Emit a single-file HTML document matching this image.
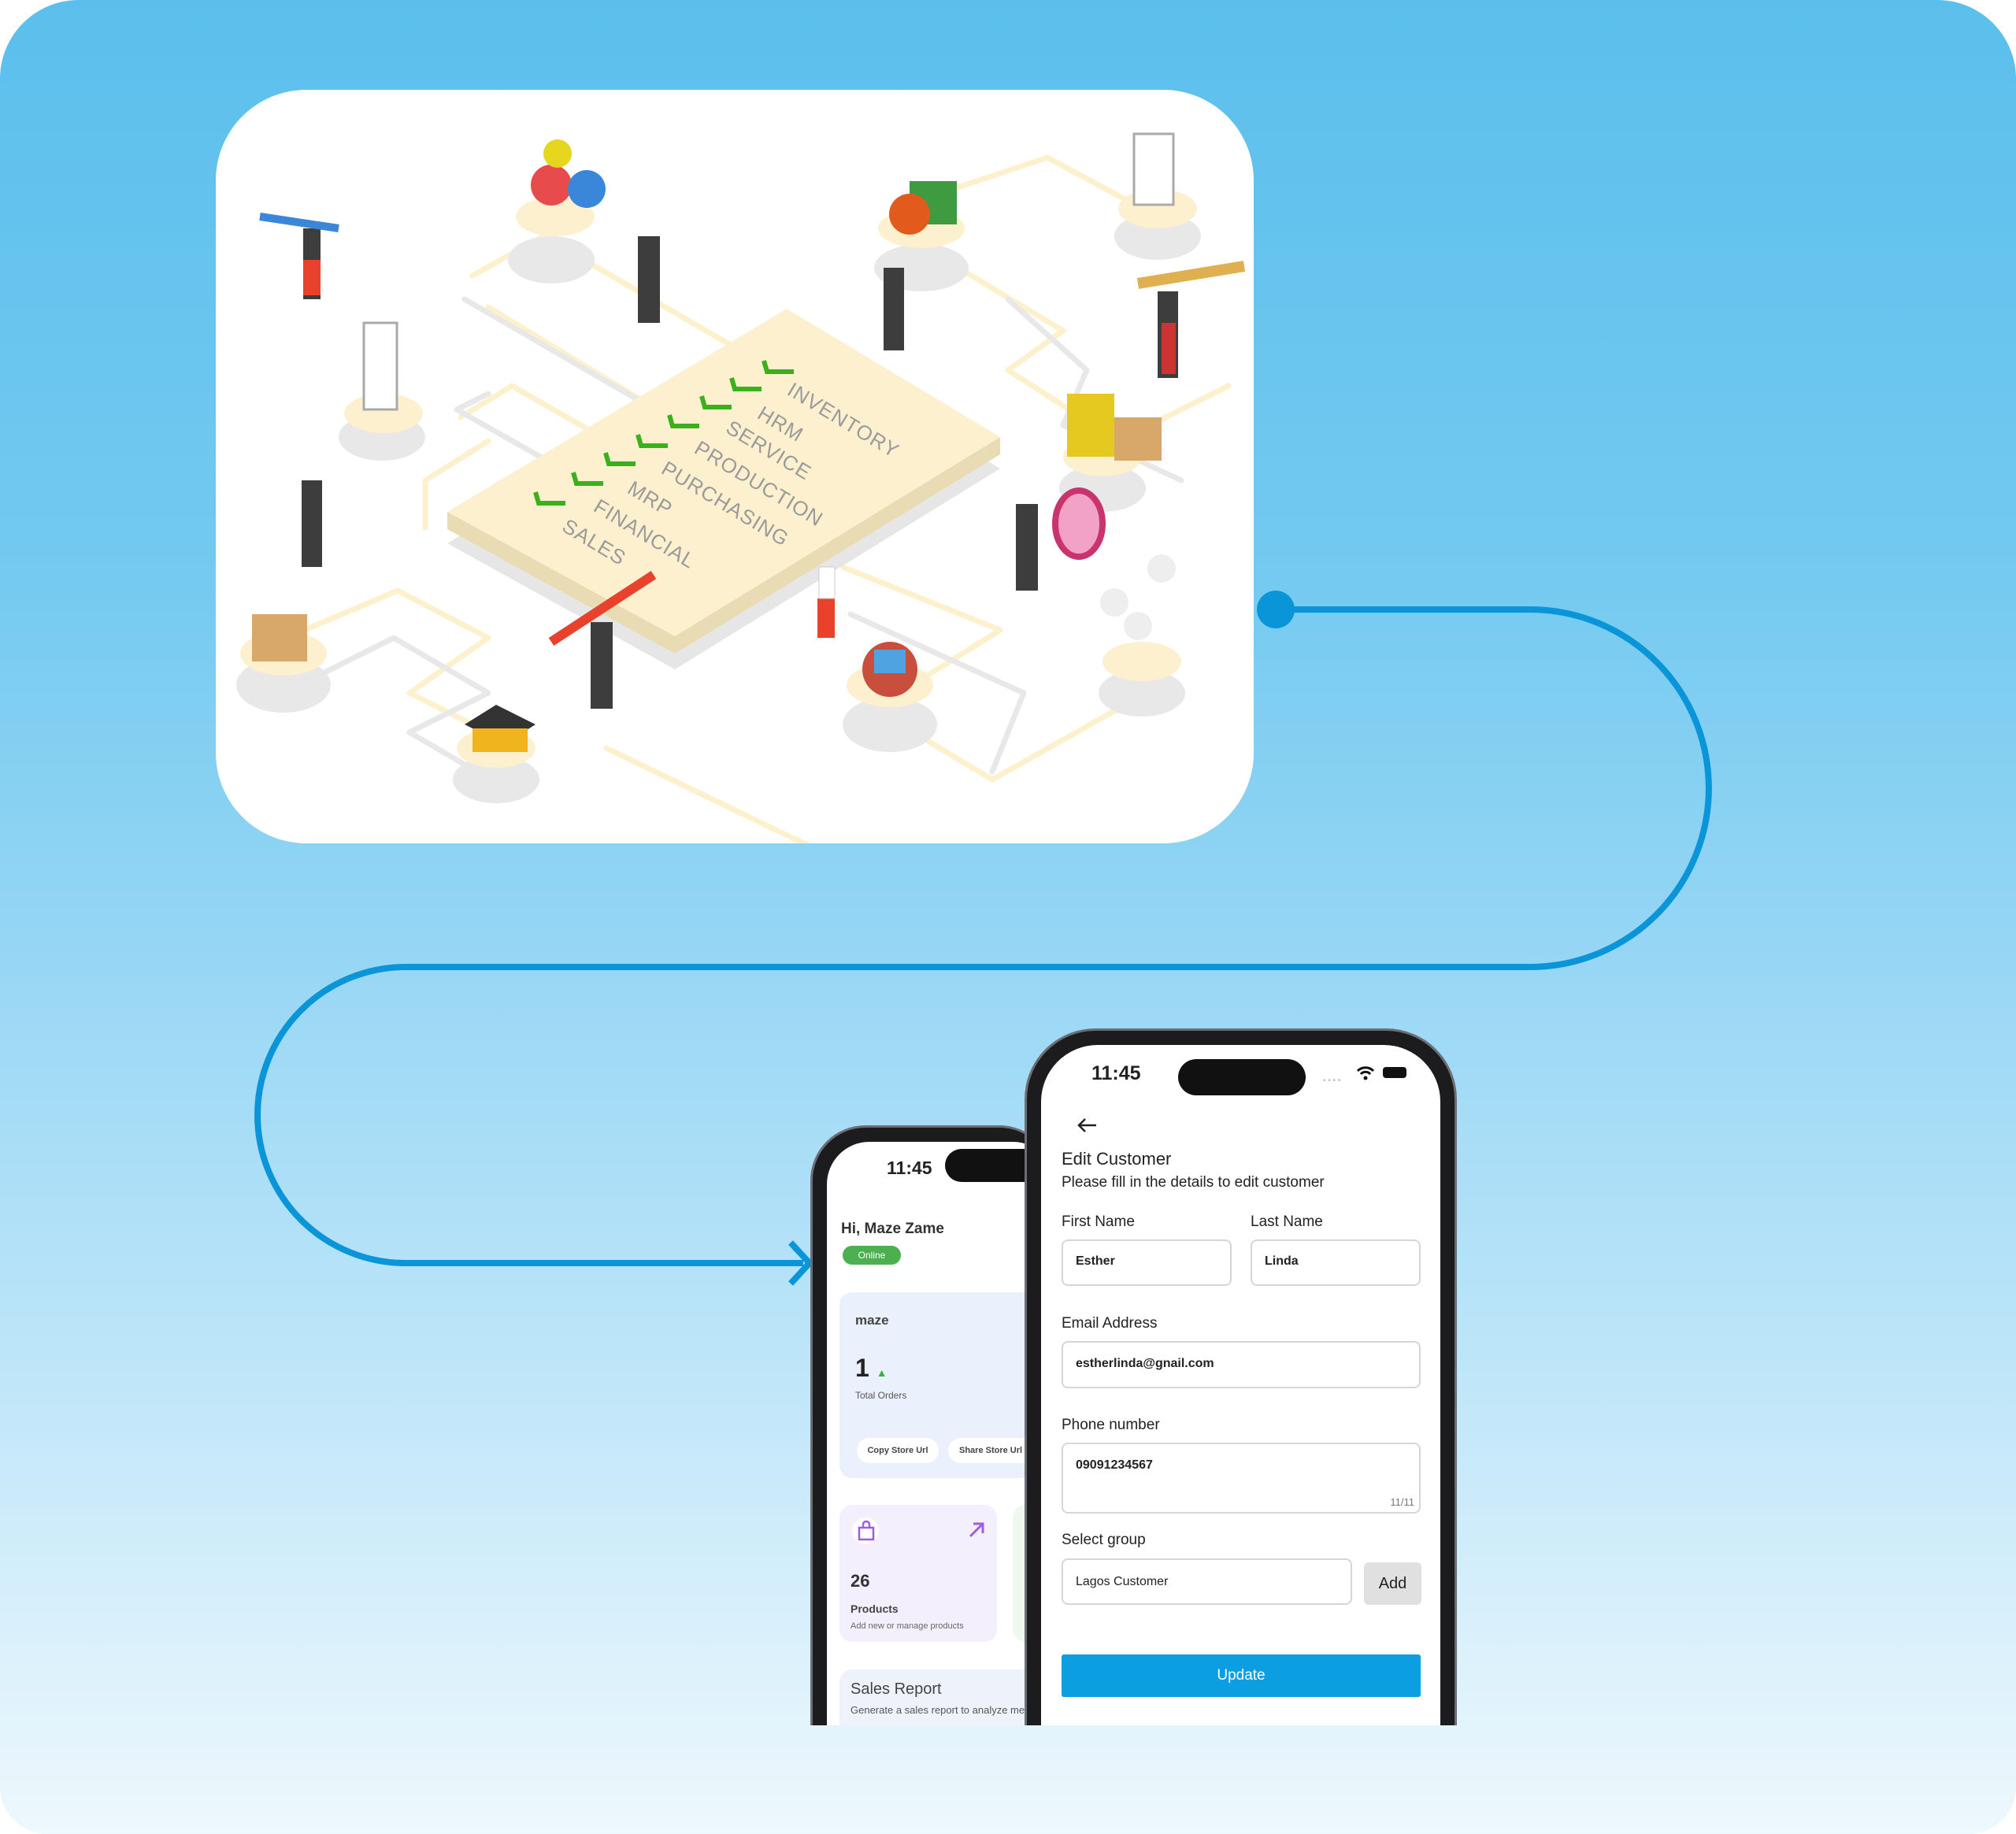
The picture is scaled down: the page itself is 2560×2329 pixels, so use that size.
<!DOCTYPE html>
<html><head><meta charset="utf-8"><style>
*{margin:0;padding:0;box-sizing:border-box}
body{width:2560px;height:2329px;background:#fff;position:relative;overflow:hidden;font-family:"Liberation Sans","DejaVu Sans",sans-serif}
.bg{position:absolute;left:0;top:0;width:2560px;height:2329px;border-radius:100px 100px 60px 60px;background:linear-gradient(180deg,#5bbfec 0%,#72c9f0 30%,#93d5f4 50%,#bfe6f9 75%,#eef8fd 100%)}
.card{position:absolute;left:274px;top:114px;width:1318px;height:957px;background:#fff;border-radius:115px;overflow:hidden}
.abs{position:absolute}
.clip{position:absolute;left:0;top:0;width:2560px;height:2191px;overflow:hidden}
.phone{position:absolute;background:#1c1c1e;border:3px solid #6b6e74;overflow:hidden}
.screen{position:absolute;background:#fff;overflow:hidden}
.t{position:absolute;white-space:nowrap;color:#222}
.inp{position:absolute;border:2px solid #d6d6d6;border-radius:8px;background:#fff}
</style></head><body>
<div class="bg"></div>

<div class="card">
<svg width="1318" height="957" viewBox="274 114 1318 957" style="position:absolute;left:0;top:0">
 <g fill="none" stroke-width="7" stroke-linecap="round" stroke-linejoin="round">
  <path d="M600 350 L690 300 L1000 480 M620 390 L900 560 M585 530 L650 490 L860 610 M620 560 L540 610 L540 670" stroke="#fdf0cc"/>
  <path d="M1180 250 L1330 200 L1460 270 M1200 330 L1350 420 L1280 470 L1420 560 L1560 490" stroke="#fdf0cc"/>
  <path d="M340 820 L505 750 L620 810 L520 880 L640 940 M770 950 L1060 1090 M1070 720 L1270 800 L1110 900 L1260 990 L1420 900" stroke="#fdf0cc"/>
  <path d="M590 380 L900 560 M620 500 L580 520 L880 690 M1280 380 L1380 470 L1350 540 L1500 610" stroke="#e8e8e8"/>
  <path d="M380 870 L500 810 L620 880 L520 930 L640 1000 M1080 780 L1300 880 L1260 980" stroke="#e8e8e8"/>
 </g>
 <polygon points="568,690 999,432 1270,595 857,850" fill="#e6e6e6"/>
 <polygon points="568,650 568,672 857,830 1270,577 1270,555 857,808" fill="#e9dcb4"/>
 <polygon points="568,650 999,392 1270,555 857,808" fill="#fcf0cf"/>
 <g fill="#e8e8e8">
  <ellipse cx="700" cy="330" rx="55" ry="30"/><ellipse cx="485" cy="555" rx="55" ry="30"/>
  <ellipse cx="360" cy="870" rx="60" ry="35"/><ellipse cx="630" cy="990" rx="55" ry="30"/>
  <ellipse cx="1170" cy="340" rx="60" ry="30"/><ellipse cx="1470" cy="300" rx="55" ry="30"/>
  <ellipse cx="1400" cy="620" rx="55" ry="30"/><ellipse cx="1130" cy="920" rx="60" ry="35"/>
  <ellipse cx="1450" cy="880" rx="55" ry="30"/>
 </g>
 <g fill="#fcf0cf">
  <ellipse cx="705" cy="275" rx="50" ry="25"/><ellipse cx="487" cy="525" rx="50" ry="25"/>
  <ellipse cx="360" cy="830" rx="55" ry="28"/><ellipse cx="630" cy="950" rx="50" ry="25"/>
  <ellipse cx="1170" cy="290" rx="55" ry="25"/><ellipse cx="1470" cy="265" rx="50" ry="25"/>
  <ellipse cx="1400" cy="580" rx="50" ry="25"/><ellipse cx="1130" cy="870" rx="55" ry="28"/>
  <ellipse cx="1450" cy="840" rx="50" ry="25"/>
 </g>
 <circle cx="700" cy="235" r="26" fill="#e84b4b"/><circle cx="745" cy="240" r="24" fill="#3a86d8"/><circle cx="708" cy="195" r="18" fill="#e5d71d"/>
 <rect x="1155" y="230" width="60" height="55" fill="#3f9b40"/><circle cx="1155" cy="272" r="26" fill="#e35b1c"/>
 <rect x="1440" y="170" width="50" height="90" fill="#fff" stroke="#aaa" stroke-width="3"/>
 <rect x="462" y="410" width="42" height="110" fill="#fff" stroke="#aaa" stroke-width="3"/>
 <rect x="1355" y="500" width="60" height="80" fill="#e5c820"/><rect x="1415" y="530" width="60" height="55" fill="#d7a86a"/>
 <rect x="320" y="780" width="70" height="60" fill="#d7a86a"/>
 <polygon points="590,920 630,895 680,920 640,945" fill="#333"/><rect x="600" y="925" width="70" height="30" fill="#f0b41f"/>
 <circle cx="1130" cy="850" r="35" fill="#c94f3d"/><rect x="1110" y="825" width="40" height="30" fill="#4fa3e0"/>
 <ellipse cx="1370" cy="665" rx="30" ry="42" fill="#f2a3c5" stroke="#c9346f" stroke-width="8"/>
 <circle cx="1415" cy="765" r="18" fill="#eee"/><circle cx="1475" cy="722" r="18" fill="#eee"/><circle cx="1445" cy="795" r="18" fill="#eee"/>
 <g fill="#3d3d3d">
  <rect x="385" y="290" width="22" height="90"/><rect x="810" y="300" width="28" height="110"/>
  <rect x="1122" y="340" width="26" height="105"/><rect x="1470" y="370" width="26" height="110"/>
  <rect x="383" y="610" width="26" height="110"/><rect x="750" y="790" width="28" height="110"/>
  <rect x="1290" y="640" width="28" height="110"/>
 </g>
 <rect x="385" y="330" width="22" height="45" fill="#e8412c"/><rect x="1475" y="410" width="18" height="65" fill="#c33"/>
 <rect x="1038" y="760" width="22" height="50" fill="#e8412c"/><rect x="1040" y="720" width="20" height="40" fill="#fff" stroke="#ccc"/>
 <line x1="330" y1="275" x2="430" y2="290" stroke="#3a86d8" stroke-width="10"/>
 <line x1="700" y1="815" x2="830" y2="730" stroke="#e8412c" stroke-width="12"/>
 <line x1="1445" y1="360" x2="1580" y2="338" stroke="#e0b050" stroke-width="14"/>
 <g fill="none" stroke="#3ab01a" stroke-width="6">
  <path d="M970 458 L974 472 L1008 472"/><path d="M929 480 L933 494 L967 494"/><path d="M891 503 L895 517 L929 517"/>
  <path d="M850 527 L854 541 L888 541"/><path d="M810 552 L814 566 L848 566"/><path d="M769 575 L773 589 L807 589"/>
  <path d="M728 600 L732 614 L766 614"/><path d="M680 625 L684 639 L718 639"/>
 </g>
 <g font-family="Liberation Sans, sans-serif" font-size="26" fill="#9a9a9a" letter-spacing="1">
  <text transform="translate(998,500) rotate(31)">INVENTORY</text>
  <text transform="translate(960,530) rotate(31)">HRM</text>
  <text transform="translate(920,548) rotate(31)">SERVICE</text>
  <text transform="translate(880,574) rotate(31)">PRODUCTION</text>
  <text transform="translate(838,600) rotate(31)">PURCHASING</text>
  <text transform="translate(795,625) rotate(31)">MRP</text>
  <text transform="translate(752,648) rotate(31)">FINANCIAL</text>
  <text transform="translate(712,673) rotate(31)">SALES</text>
 </g>
</svg>
</div>

<svg width="2560" height="2329" style="position:absolute;left:0;top:0">
 <path d="M1620 774 L1943 774 A227 227 0 0 1 1943 1228 L515 1228 A188 188 0 0 0 515 1604 L1020 1604" fill="none" stroke="#0a95d9" stroke-width="8"/>
 <circle cx="1620" cy="774" r="24" fill="#0a95d9"/>
 <path d="M1004 1578 L1028 1604 L1004 1630" fill="none" stroke="#0a95d9" stroke-width="8"/>
</svg>

<div class="clip">
<div class="phone" style="left:1029px;top:1429px;width:310px;height:800px;border-radius:70px 70px 0 0;border-bottom:none">
 <div class="screen" style="left:18px;top:18px;width:290px;height:780px;border-radius:54px 54px 0 0">
  <div class="t" style="left:76px;top:20px;font-size:23px;font-weight:bold">11:45</div>
  <div class="abs" style="left:150px;top:9px;width:140px;height:42px;border-radius:21px;background:#111"></div>
  <div class="t" style="left:18px;top:100px;font-size:19px;font-weight:bold;color:#333">Hi, Maze Zame</div>
  <div class="abs" style="left:20px;top:132px;width:74px;height:24px;border-radius:12px;background:#4caf50;color:#fff;font-size:12px;text-align:center;line-height:24px">Online</div>
  <div class="abs" style="left:16px;top:191px;width:300px;height:236px;border-radius:16px;background:#eaf1fc">
   <div class="t" style="left:20px;top:26px;font-size:17px;font-weight:bold;color:#444">maze</div>
   <div class="t" style="left:20px;top:78px;font-size:32px;font-weight:bold;color:#222">1 <span style="color:#3ab04a;font-size:14px">▲</span></div>
   <div class="t" style="left:20px;top:124px;font-size:12px;color:#555">Total Orders</div>
   <div class="abs" style="left:22px;top:185px;width:104px;height:32px;border-radius:16px;background:#fff;font-size:11px;font-weight:bold;color:#444;text-align:center;line-height:32px">Copy Store Url</div>
   <div class="abs" style="left:138px;top:185px;width:120px;height:32px;border-radius:16px;background:#fff;font-size:11px;font-weight:bold;color:#444;line-height:32px;padding-left:14px;white-space:nowrap">Share Store Url</div>
  </div>
  <div class="abs" style="left:16px;top:461px;width:200px;height:174px;border-radius:16px;background:#f4effd">
   <div class="abs" style="left:16px;top:16px;width:34px;height:34px;border-radius:17px;background:#fff"></div>
   <svg class="abs" style="left:22px;top:20px" width="24" height="26"><path d="M3 9 H21 V24 H3 Z M8 9 V5 A4 4 0 0 1 16 5 V9" fill="none" stroke="#9b5de5" stroke-width="2.5"/></svg>
   <svg class="abs" style="left:162px;top:20px" width="24" height="24"><path d="M4 20 L20 4 M8 4 H20 V16" fill="none" stroke="#9b5de5" stroke-width="3"/></svg>
   <div class="t" style="left:14px;top:84px;font-size:22px;font-weight:bold;color:#333">26</div>
   <div class="t" style="left:14px;top:124px;font-size:14px;font-weight:bold;color:#444">Products</div>
   <div class="t" style="left:14px;top:148px;font-size:11px;color:#666">Add new or manage products</div>
  </div>
  <div class="abs" style="left:236px;top:461px;width:100px;height:174px;border-radius:16px;background:#eef8ef"></div>
  <div class="abs" style="left:16px;top:670px;width:300px;height:120px;border-radius:16px;background:#eef3fb">
   <div class="t" style="left:14px;top:14px;font-size:20px;color:#444">Sales Report</div>
   <div class="t" style="left:14px;top:44px;font-size:13px;color:#555">Generate a sales report to analyze metrics</div>
  </div>
 </div>
</div>

<div class="phone" style="left:1301px;top:1306px;width:549px;height:900px;border-radius:90px 90px 0 0;border-bottom:none">
 <div class="screen" style="left:18px;top:18px;width:507px;height:880px;border-radius:72px 72px 0 0">
  <div class="t" style="left:64px;top:22px;font-size:25px;font-weight:bold">11:45</div>
  <div class="abs" style="left:174px;top:18px;width:162px;height:46px;border-radius:23px;background:#111"></div>
  <div class="abs" style="left:358px;top:40px;font-size:10px;color:#bbb">• • • •</div>
  <svg class="abs" style="left:400px;top:26px" width="24" height="20"><path d="M2 7 A14 14 0 0 1 22 7 M6 11 A8 8 0 0 1 18 11" fill="none" stroke="#111" stroke-width="3"/><circle cx="12" cy="16" r="2.5" fill="#111"/></svg>
  <div class="abs" style="left:434px;top:28px;width:30px;height:14px;border-radius:4px;background:#111"></div>
  <svg class="abs" style="left:44px;top:90px" width="30" height="24"><path d="M26 12 H4 M12 4 L4 12 L12 20" fill="none" stroke="#222" stroke-width="2.5"/></svg>
  <div class="t" style="left:26px;top:132px;font-size:22px;color:#222">Edit Customer</div>
  <div class="t" style="left:26px;top:164px;font-size:19px;color:#222">Please fill in the details to edit customer</div>
  <div class="t" style="left:26px;top:214px;font-size:19px;color:#222">First Name</div>
  <div class="t" style="left:266px;top:214px;font-size:19px;color:#222">Last Name</div>
  <div class="inp" style="left:26px;top:247px;width:216px;height:59px"><span class="t" style="left:16px;top:17px;font-size:16px;font-weight:bold">Esther</span></div>
  <div class="inp" style="left:266px;top:247px;width:216px;height:59px"><span class="t" style="left:16px;top:17px;font-size:16px;font-weight:bold">Linda</span></div>
  <div class="t" style="left:26px;top:343px;font-size:19px;color:#222">Email Address</div>
  <div class="inp" style="left:26px;top:376px;width:456px;height:60px"><span class="t" style="left:16px;top:18px;font-size:16px;font-weight:bold">estherlinda@gnail.com</span></div>
  <div class="t" style="left:26px;top:472px;font-size:19px;color:#222">Phone number</div>
  <div class="inp" style="left:26px;top:505px;width:456px;height:90px"><span class="t" style="left:16px;top:18px;font-size:16px;font-weight:bold">09091234567</span><span class="t" style="right:6px;top:66px;font-size:13px;color:#777">11/11</span></div>
  <div class="t" style="left:26px;top:618px;font-size:19px;color:#222">Select group</div>
  <div class="inp" style="left:26px;top:652px;width:369px;height:59px"><span class="t" style="left:16px;top:19px;font-size:16px">Lagos Customer</span></div>
  <div class="abs" style="left:410px;top:657px;width:73px;height:54px;border-radius:6px;background:#e0e0e0;font-size:20px;color:#222;text-align:center;line-height:54px">Add</div>
  <div class="abs" style="left:26px;top:774px;width:456px;height:54px;border-radius:3px;background:#0b9ee0;color:#fff;font-size:19px;text-align:center;line-height:54px">Update</div>
 </div>
</div>
</div>
</body></html>
